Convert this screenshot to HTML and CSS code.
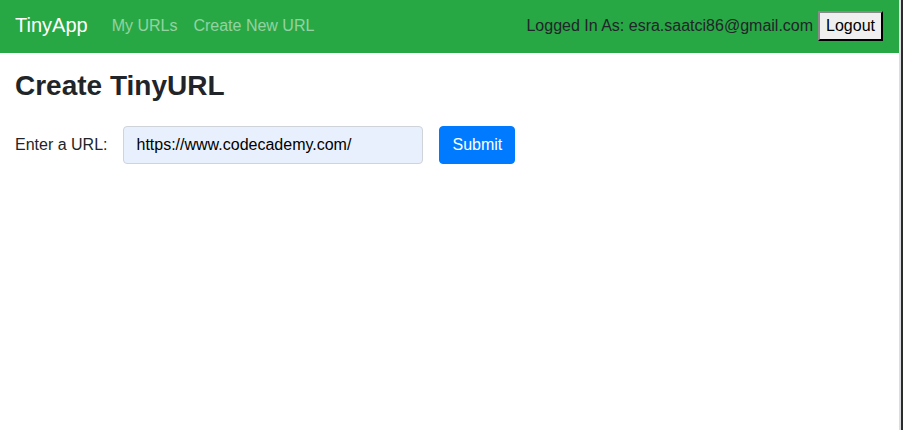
FILE: index.html
```html
<!DOCTYPE html>
<html lang="en">
<head>
<meta charset="utf-8">
<title>TinyApp</title>
<link rel="stylesheet" href="styles.css">
</head>
<body>
<div class="frame">
  <nav class="navbar">
    <a class="brand" href="#">TinyApp</a>
    <a class="nav-link" href="#">My URLs</a>
    <a class="nav-link" href="#">Create New URL</a>
    <div class="user">
      <span class="logged">Logged In As: esra.saatci86@gmail.com</span>
      <button class="logout" type="button">Logout</button>
    </div>
  </nav>
  <main class="main">
    <h3 class="title">Create TinyURL</h3>
    <form class="url-form">
      <label class="label" for="longURL">Enter a URL:</label>
      <input class="url-input" id="longURL" type="text" value="https://www.codecademy.com/">
      <button class="submit" type="button">Submit</button>
    </form>
  </main>
</div>
</body>
</html>
```

FILE: styles.css
```css
html, body {
  margin: 0;
  padding: 0;
  height: 100%;
}
body {
  font-family: "Liberation Sans", Arial, sans-serif;
  font-size: 16px;
  color: #212529;
  background: #2b2b2b;
  display: flex;
}
.frame {
  width: 899px;
  height: 100%;
  background: #fff;
  border-right: 2px solid #dcdde1;
}
.navbar {
  height: 53px;
  box-sizing: border-box;
  background: #28a745;
  display: flex;
  align-items: center;
  padding: 0 16px 2px 15px;
}
.brand {
  font-size: 20px;
  color: #fff;
  text-decoration: none;
  margin-right: 16px;
}
.nav-link {
  color: rgba(255, 255, 255, 0.5);
  text-decoration: none;
  padding: 0 8px;
  font-size: 16px;
}
.user {
  margin-left: auto;
  display: flex;
  align-items: center;
}
.logged {
  color: #212529;
  margin-right: 5px;
}
.logout {
  font-family: "Liberation Sans", Arial, sans-serif;
  font-size: 16px;
  color: #000;
  background: #efefef;
  border: 2px outset #8a8a8a;
  border-right-color: #333;
  border-bottom-color: #333;
  padding: 3px 6px;
  height: 30px;
  border-radius: 0;
}
.main {
  padding: 16px 15px;
}
.title {
  margin: 0;
  font-size: 28px;
  font-weight: 700;
  line-height: 1.2;
}
.url-form {
  display: flex;
  align-items: center;
  margin-top: 23px;
}
.label {
  margin-right: 16px;
}
.url-input {
  width: 300px;
  height: 38px;
  box-sizing: border-box;
  padding: 6px 12px;
  font-family: "Liberation Sans", Arial, sans-serif;
  font-size: 16px;
  color: #000;
  background: #e8f0fe;
  border: 1px solid #ced4da;
  border-radius: 4px;
  margin-right: 16px;
}
.submit {
  height: 38px;
  padding: 6px 12px;
  font-family: "Liberation Sans", Arial, sans-serif;
  font-size: 16px;
  color: #fff;
  background: #007bff;
  border: 1px solid #007bff;
  border-radius: 4px;
}
```
